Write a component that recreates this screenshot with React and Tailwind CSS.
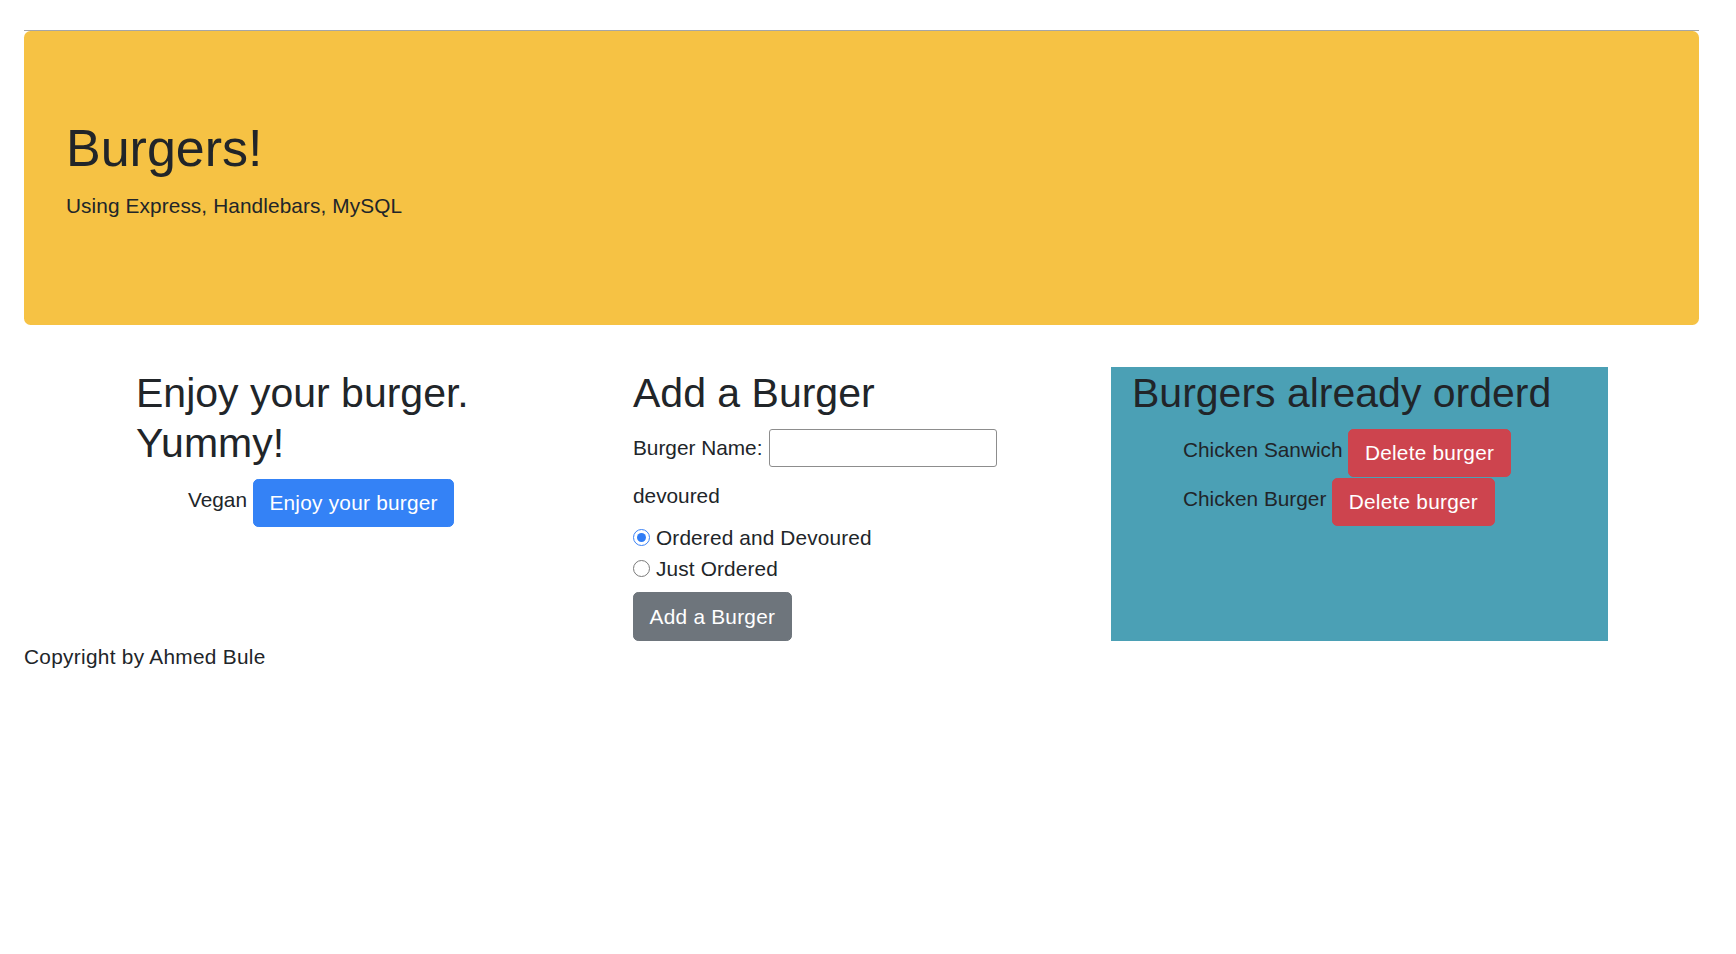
export default function App() {
  const btn =
    "inline-block text-white px-[15.6px] py-[7.8px] border rounded-[5.2px] leading-[1.5] tracking-[0.25px]";
  return (
    <div className="w-[1736px] min-h-[954px] bg-white font-['Liberation_Sans',Arial,sans-serif] text-[#212529] text-[20.8px] leading-[1.5]">
      <div className="ml-[24px] pt-[30px] w-[1675px]">
        <div className="h-px bg-[#a6a6a6]" />
        <div className="bg-[#f6c244] rounded-[6.5px] px-[42px] pt-[86px] pb-[82.8px] mb-[42.6px]">
          <h1 className="text-[52px] leading-[1.2] mb-[10.4px] font-normal">Burgers!</h1>
          <p className="mb-[20.8px] tracking-[0.1px]">Using Express, Handlebars, MySQL</p>
        </div>

        <div className="flex ml-[92px]">
          <div className="w-[497px] px-[20px]">
            <h2 className="text-[41px] leading-[50px] mt-[1px] mb-[10.4px] font-normal">
              Enjoy your burger.
              <br />
              Yummy!
            </h2>
            <ul className="pl-[52px]">
              <li className="h-[49px]">
                Vegan{" "}
                <button className={`${btn} align-[-4px] bg-[#3482f6] border-[#3482f6]`}>
                  Enjoy your burger
                </button>
              </li>
            </ul>
          </div>

          <div className="w-[498px] px-[20px]">
            <h2 className="text-[41px] leading-[50px] mt-[1px] mb-[10.4px] font-normal">Add a Burger</h2>
            <div className="flex items-center gap-[7px]">
              <label>Burger Name:</label>
              <input
                type="text"
                className="w-[228px] h-[38px] border border-[#8d8d8d] rounded-[3px] bg-white"
              />
            </div>
            <div className="mt-[13.6px] mb-[10.4px]">devoured</div>
            <div className="flex items-center gap-[6px] h-[31.2px]">
              <span className="w-[17px] h-[17px] rounded-full border-[1.5px] border-[#3b82f6] bg-white flex items-center justify-center">
                <span className="w-[9px] h-[9px] rounded-full bg-[#2f7cf6]" />
              </span>
              <span className="tracking-[0.15px]">Ordered and Devoured</span>
            </div>
            <div className="flex items-center gap-[6px] h-[31.2px]">
              <span className="w-[17px] h-[17px] rounded-full border border-[#7a7a7a] bg-white" />
              <span className="tracking-[0.15px]">Just Ordered</span>
            </div>
            <button className={`${btn} align-baseline mt-[8px] bg-[#6e757c] border-[#6e757c]`}>
              Add a Burger
            </button>
          </div>

          <div className="w-[497px] px-[21px] bg-[#4ba0b5]">
            <h2 className="text-[41px] leading-[50px] mt-[1px] mb-[10.4px] font-normal">Burgers already orderd</h2>
            <ul className="pl-[51px]">
              <li className="h-[49px]">
                Chicken Sanwich{" "}
                <button className={`${btn} align-[-4px] bg-[#cd444e] border-[#cd444e]`}>
                  Delete burger
                </button>
              </li>
              <li className="h-[49px]">
                Chicken Burger{" "}
                <button className={`${btn} align-[-4px] bg-[#cd444e] border-[#cd444e]`}>
                  Delete burger
                </button>
              </li>
            </ul>
          </div>
        </div>

        <p className="tracking-[0.3px]">Copyright by Ahmed Bule</p>
      </div>
    </div>
  );
}
